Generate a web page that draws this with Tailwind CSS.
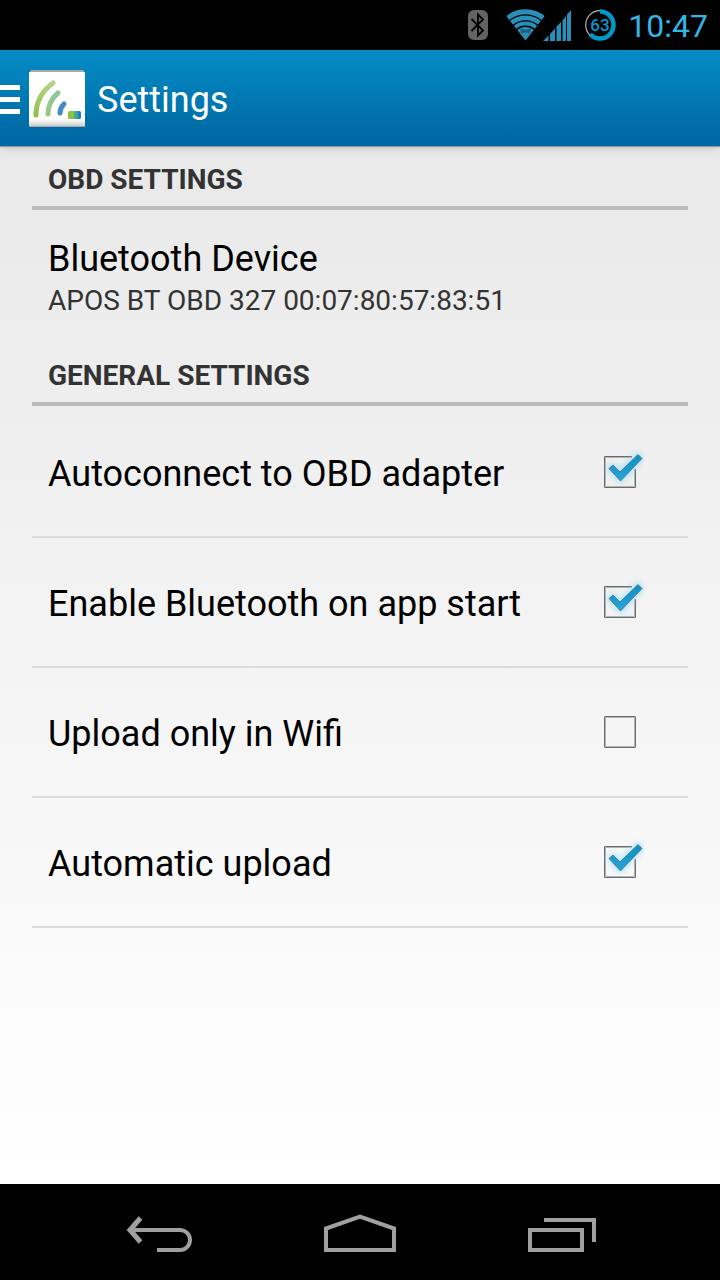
<!DOCTYPE html>
<html lang="en">
<head>
<meta charset="utf-8">
<meta name="viewport" content="width=device-width, initial-scale=1">
<title>Settings</title>
<script src="https://cdn.jsdelivr.net/npm/@tailwindcss/browser@4"></script>
</head>
<body class="min-h-screen flex flex-col bg-black font-['Roboto',sans-serif] text-black">
<svg class="absolute size-0" aria-hidden="true">
  <defs>
    <linearGradient id="tick" x1="0" y1="0" x2="0" y2="1"><stop offset="0" stop-color="#0c8fc6"/><stop offset="1" stop-color="#27a5d8"/></linearGradient>
    <filter id="glow" x="-50%" y="-50%" width="200%" height="200%"><feGaussianBlur stdDeviation="3"/></filter>
    <symbol id="box-on" viewBox="0 0 48 48">
      <path d="M36 9.500H9.500V38.500H38.500V21" fill="none" stroke="#b4b4b4" stroke-width="1"/>
      <path d="M36 8.500H8.500V39.500H39.500V21" fill="none" stroke="#6a6a6a" stroke-width="1"/>
      <path d="M13 20.500 17 17 24 24 42 6 46 10 24.500 33Z" fill="#8fd8f8" stroke="#8fd8f8" stroke-width="4" opacity=".65" filter="url(#glow)"/>
      <path d="M13 20.500 17 17 24 24 42 6.500 46 10.500 24.500 33Z" fill="url(#tick)" stroke="#4f8299" stroke-width="1" stroke-linejoin="round"/>
    </symbol>
    <symbol id="box-off" viewBox="0 0 48 48">
      <path d="M9.500 9.500H38.500V38.500H9.500Z" fill="none" stroke="#b4b4b4" stroke-width="1"/>
      <path d="M8.500 8.500H39.500V39.500H8.500Z" fill="none" stroke="#6a6a6a" stroke-width="1"/>
    </symbol>
  </defs>
</svg>

<div class="h-[50px] flex items-center justify-end pr-3 text-[#33b5e5] bg-black relative z-10">
  <svg class="w-5 h-8 mr-4" viewBox="0 0 20 32" role="img" aria-label="Bluetooth">
    <rect y="1" width="20" height="30" rx="6" fill="#636363"/>
    <path d="M3.500 10 15 21.500 10 26.500V5.500L15 10.500 3.500 22" fill="none" stroke="#000" stroke-width="1.800"/>
  </svg>
  <svg class="w-[68px] h-8" viewBox="0 0 68 32" role="img" aria-label="Wifi and mobile signal">
    <defs><clipPath id="fan"><path d="M21.500 31.500 1.500 6V0H41.500V6Z"/></clipPath></defs>
    <g clip-path="url(#fan)" fill="none" stroke="#298fb8">
      <circle cx="21.500" cy="31" r="28.200" stroke-width="5"/><circle cx="21.500" cy="31" r="22.100" stroke-width="4.600"/><circle cx="21.500" cy="31" r="16.400" stroke-width="4"/>
      <circle cx="21.500" cy="31" r="13" fill="#298fb8" stroke="none"/>
      <path d="M16 19.500 21.500 21 27 19.500 25.500 25 23 23.500H20L17.500 25Z" fill="#1c5f7d" stroke="none"/>
    </g>
    <path d="M39 32 44.500 26.500V32ZM46 32V25L51 19.500V32ZM52.500 32V17.500L57 13V32ZM58.500 32V11.500L62 7V32ZM63 32V5.500L67 1V32Z" fill="#298fb8"/>
  </svg>
  <svg class="w-8 h-8 ml-3 mr-3" viewBox="0 0 32 32" role="img" aria-label="Battery 63 percent">
    <circle cx="16" cy="16" r="14.300" fill="none" stroke="#b5b5b5" stroke-width="1.200"/>
    <circle cx="16" cy="16" r="13.500" fill="none" stroke="#0099cc" stroke-width="4.500" pathLength="100" stroke-dasharray="63 37" transform="rotate(-90 16 16)"/>
    <text x="16" y="22" text-anchor="middle" font-size="17" font-weight="500" fill="#0099cc">63</text>
  </svg>
  <time class="text-[32px] leading-none pt-0.5">10:47</time>
</div>

<header class="h-24 flex items-center bg-linear-to-b from-[#058cc5] to-[#0066a1] text-white relative shadow-[0_1px_1px_#999,0_2px_8px_#c4c4c4]">
  <button aria-label="Open menu" class="flex items-center h-full w-[97px]">
    <svg class="w-5 h-[34px]" viewBox="0 0 20 34"><path d="M0 6.500H20M0 18.500H20M0 30.500H20" stroke="#fff" stroke-width="5"/></svg>
    <svg class="w-14 h-[58px] ml-[9px]" viewBox="0 0 56 58">
      <defs>
        <linearGradient id="tile" x1="0" y1="0" x2="0" y2="1"><stop offset=".88" stop-color="#fff"/><stop offset="1" stop-color="#ccc"/></linearGradient>
        <linearGradient id="arcA" x1="0" y1="1" x2="0" y2="0"><stop stop-color="#8fc243"/><stop offset="1" stop-color="#b4d58a"/></linearGradient>
        <linearGradient id="arcB" x1="0" y1="1" x2="0" y2="0"><stop stop-color="#9cc97f"/><stop offset="1" stop-color="#8fc4a4"/></linearGradient>
        <linearGradient id="plug"><stop offset=".45" stop-color="#8fc243"/><stop offset=".5" stop-color="#3caf9b"/><stop offset=".7" stop-color="#3caf9b"/><stop offset=".8" stop-color="#237fc2"/></linearGradient>
      </defs>
      <path d="M0 4 2 1H54L56 4V58H0Z" fill="#a8a8a8"/>
      <path d="M0 3H56V57H0Z" fill="url(#tile)"/>
      <g fill="none" stroke-width="5" stroke-linecap="round">
        <path d="M7 46C7 33 13 22 24 14" stroke="url(#arcA)"/>
        <path d="M19 45C19 37 22 30 29 24" stroke="url(#arcB)"/>
        <path d="M31 44C31 41 32 38 35 35" stroke="#428ccd"/>
      </g>
      <rect x="39" y="42" width="13" height="8" rx="1.500" fill="url(#plug)"/>
    </svg>
  </button>
  <h1 class="text-[36px] leading-10 pt-1">Settings</h1>
</header>

<main class="grow px-8 bg-linear-to-b from-[#e9e9e9] to-white">
  <section>
    <h2 class="h-16 px-4 pt-[18px] border-b-4 border-[#bbb] text-[28px] leading-8 font-bold text-[#333]">OBD SETTINGS</h2>
    <button class="block w-full px-4 pt-7 pb-5 text-left">
      <span class="block text-[36px] leading-[42px]">Bluetooth Device</span>
      <span class="block text-[28px] leading-[42px] text-[#333]">APOS BT OBD 327 00:07:80:57:83:51</span>
    </button>
  </section>
  <section>
    <h2 class="h-16 px-4 pt-[18px] border-b-4 border-[#bbb] text-[28px] leading-8 font-bold text-[#333]">GENERAL SETTINGS</h2>
    <div class="pt-0.5">
      <label class="flex items-center h-[130px] pl-4 pr-11 border-b-2 border-[#dcdcdc] text-[36px]"><span class="grow pt-1">Autoconnect to OBD adapter</span><input type="checkbox" checked class="peer sr-only"><svg class="size-12 hidden peer-checked:block"><use href="#box-on"/></svg><svg class="size-12 peer-checked:hidden"><use href="#box-off"/></svg></label>
      <label class="flex items-center h-[130px] pl-4 pr-11 border-b-2 border-[#dcdcdc] text-[36px]"><span class="grow pt-1">Enable Bluetooth on app start</span><input type="checkbox" checked class="peer sr-only"><svg class="size-12 hidden peer-checked:block"><use href="#box-on"/></svg><svg class="size-12 peer-checked:hidden"><use href="#box-off"/></svg></label>
      <label class="flex items-center h-[130px] pl-4 pr-11 border-b-2 border-[#dcdcdc] text-[36px]"><span class="grow pt-1">Upload only in Wifi</span><input type="checkbox" class="peer sr-only"><svg class="size-12 hidden peer-checked:block"><use href="#box-on"/></svg><svg class="size-12 peer-checked:hidden"><use href="#box-off"/></svg></label>
      <label class="flex items-center h-[130px] pl-4 pr-11 border-b-2 border-[#dcdcdc] text-[36px]"><span class="grow pt-1">Automatic upload</span><input type="checkbox" checked class="peer sr-only"><svg class="size-12 hidden peer-checked:block"><use href="#box-on"/></svg><svg class="size-12 peer-checked:hidden"><use href="#box-off"/></svg></label>
    </div>
  </section>
</main>

<nav class="h-24 pt-1.5 flex items-center justify-center gap-[100px] text-[#a0a0a0]">
  <button aria-label="Back"><svg class="block w-[100px] h-[70px]" viewBox="0 0 100 70" fill="none" stroke="currentColor" stroke-width="4"><path d="M20 30H70A10 10 0 0 1 70 50H47"/><path d="M30.500 18 20 30 30.500 42" stroke-width="5"/></svg></button>
  <button aria-label="Home"><svg class="block w-[100px] h-[70px]" viewBox="0 0 100 70" fill="none" stroke="currentColor" stroke-width="4"><path d="M16 50V28.500L50 16.500 84 28.500V50Z"/></svg></button>
  <button aria-label="Recent apps"><svg class="block w-[100px] h-[70px]" viewBox="0 0 100 70" fill="none" stroke="currentColor" stroke-width="4"><path d="M20 30H72V50H20ZM34 20H84V42"/></svg></button>
</nav>
</body>
</html>
